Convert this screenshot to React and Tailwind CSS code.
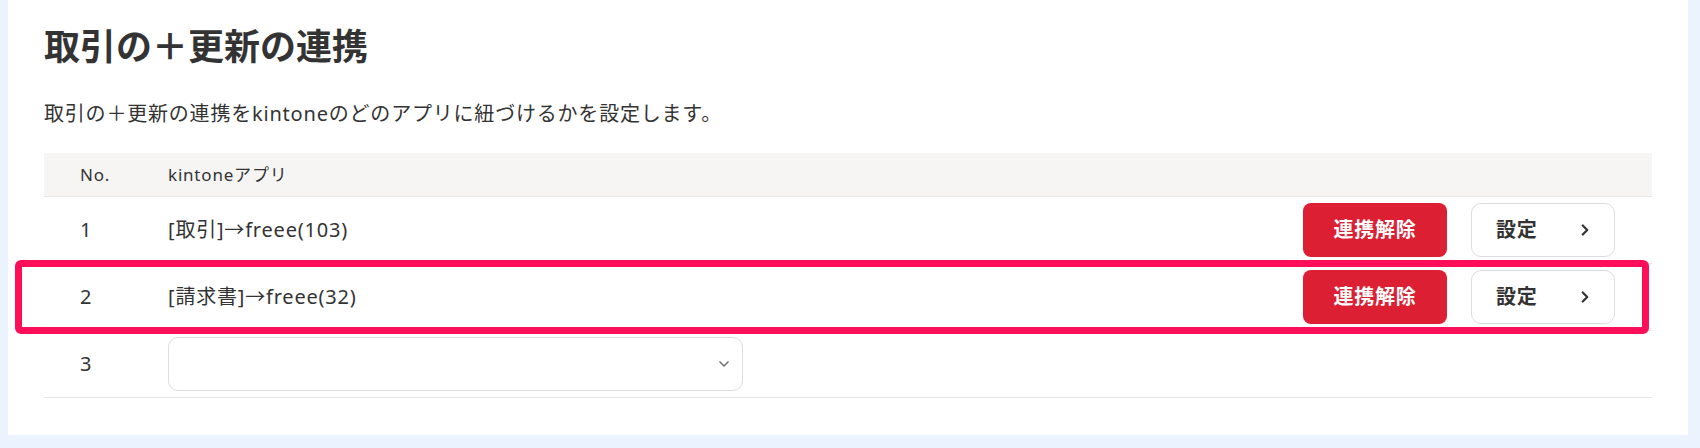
import React from 'react'
import { ChevronDown, ChevronRight } from 'lucide-react'

const rows = [
  { no: 1, app: '[取引]→freee(103)' },
  { no: 2, app: '[請求書]→freee(32)', highlight: true },
]

function LinkedRow({ no, app, highlight }) {
  return (
    <div className="relative flex items-center h-[67px] border-b border-[#e6e6e6]">
      <div className="w-[124px] pl-[36px]">{no}</div>
      <div className="flex-1">{app}</div>
      <div className="flex items-center gap-6 pr-[37px]">
        <button className="w-[144px] h-[54px] rounded-lg bg-[#dc1f33] text-white font-bold text-[20px] tracking-[0.04em]">
          連携解除
        </button>
        <button className="w-[144px] h-[54px] rounded-[10px] border border-[#dcdcdc] bg-white flex items-center justify-between pl-6 pr-[20px] font-bold text-[20px] tracking-[0.04em]">
          設定
          <ChevronRight className="w-[18px] h-[18px]" strokeWidth={3} />
        </button>
      </div>
      {highlight && (
        <div className="absolute -top-[4px] -bottom-[4px] -left-[29px] right-[3px] border-[7px] border-[#ff0f5a] rounded-md pointer-events-none" />
      )}
    </div>
  )
}

export default function App() {
  return (
    <div
      className="min-h-screen bg-[#ebf3fe] pl-2 pr-3 text-[#333]"
      style={{ fontFamily: '"Noto Sans", "Noto Sans CJK JP", sans-serif' }}
    >
      <div className="bg-white h-[435px] px-[36px] pt-[24px]">
        <h1 className="text-[36px] font-bold leading-[46px]">取引の＋更新の連携</h1>

        <p className="mt-[30px] text-[20px] leading-[28px] tracking-[0.04em]">
          取引の＋更新の連携をkintoneのどのアプリに紐づけるかを設定します。
        </p>

        <div className="mt-[25px] text-[20px] tracking-[0.04em]">
          {/* Header */}
          <div className="flex items-center h-[44px] bg-[#f6f5f4] border-b border-[#e6e6e6] text-[17px]">
            <div className="w-[124px] pl-[36px]">No.</div>
            <div className="flex-1">kintoneアプリ</div>
          </div>

          {rows.map((r) => (
            <LinkedRow key={r.no} {...r} />
          ))}

          <div className="flex items-center h-[67px] border-b border-[#e6e6e6]">
            <div className="w-[124px] pl-[36px]">3</div>
            <div className="relative w-[575px] h-[54px] rounded-[10px] border border-[#dcdcdc] bg-white">
              <ChevronDown className="absolute right-[10px] top-1/2 -translate-y-1/2 w-4 h-4 text-[#777]" strokeWidth={2.5} />
            </div>
          </div>
        </div>
      </div>
    </div>
  )
}
